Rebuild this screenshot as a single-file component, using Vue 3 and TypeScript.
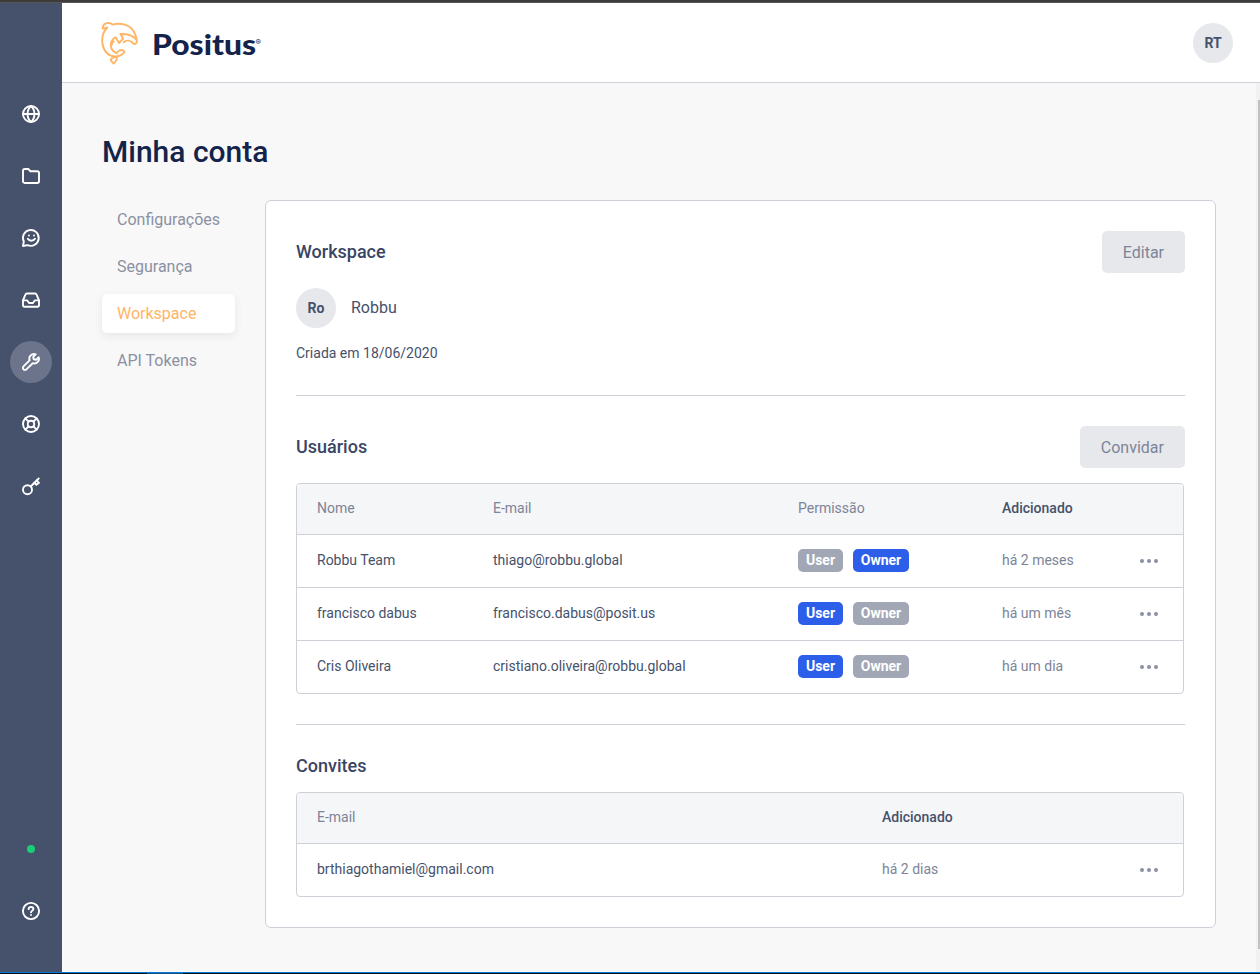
<script setup lang="ts">
import { ref } from 'vue'

interface NavIcon { id: string; shapes: string[]; active?: boolean }
interface Member { name: string; email: string; role: 'User' | 'Owner'; added: string }

const navIcons: NavIcon[] = [
  { id: 'globe', shapes: ['M11 3a8 8 0 1 0 0 16a8 8 0 0 0 0-16z', 'M3 11h16', 'M11 3c-4.6 4-4.6 12 0 16c4.6-4 4.6-12 0-16z'] },
  { id: 'folder', shapes: ['M3 16.2V5.6A1.7 1.7 0 0 1 4.700 4H8.300L10.300 6.200H17.300A1.700 1.700 0 0 1 19 7.900V16.300A1.700 1.700 0 0 1 17.300 18H4.700A1.700 1.700 0 0 1 3 16.200z'] },
  { id: 'chat', shapes: ['M3 19L3.800 14.500A7.900 7.900 0 1 1 7.600 18.100z', 'M7.800 11.800c1.600 2.600 5.600 2.600 7.200 0', 'M8.900 8.500v.1', 'M14 8.500v.1'] },
  { id: 'inbox', shapes: ['M3 11.400L5.400 5.600A1.700 1.700 0 0 1 7 4.500H15A1.700 1.700 0 0 1 16.600 5.600L19 11.400V16A1.700 1.700 0 0 1 17.300 17.700H4.700A1.700 1.700 0 0 1 3 16z', 'M3 11.400H7.300L9 14H13L14.700 11.400H19'] },
  { id: 'wrench', active: true, shapes: ['M15.700 3.300a4.700 4.700 0 0 0-6.100 6L3.500 15.400a1.900 1.900 0 0 0 2.900 2.900L12.700 12.200a4.700 4.700 0 0 0 6-6L16.100 8.700L13.700 8.300L13.200 5.900z'] },
  { id: 'support', shapes: ['M11 3a8 8 0 1 0 0 16a8 8 0 0 0 0-16z', 'M11 7.700a3.300 3.300 0 1 0 0 6.600a3.300 3.300 0 0 0 0-6.600z', 'M5.300 5.300l3.200 3.200M16.700 5.300l-3.200 3.200M5.300 16.700l3.200-3.200M16.700 16.700l-3.200-3.200'] },
  { id: 'key', shapes: ['M7.500 10.200a4.500 4.500 0 1 0 0 9a4.500 4.500 0 0 0 0-9z', 'M10.700 11.500L18.700 3.500', 'M16.700 5.500L19 7.800L16.400 9.700L14.200 7.700'] },
]

const tabs = ['Configurações', 'Segurança', 'Workspace', 'API Tokens']
const activeTab = ref('Workspace')
const roles = ['User', 'Owner'] as const

const members: Member[] = [
  { name: 'Robbu Team', email: 'thiago@robbu.global', role: 'Owner', added: 'há 2 meses' },
  { name: 'francisco dabus', email: 'francisco.dabus@posit.us', role: 'User', added: 'há um mês' },
  { name: 'Cris Oliveira', email: 'cristiano.oliveira@robbu.global', role: 'User', added: 'há um dia' },
]
const invites = [{ email: 'brthiagothamiel@gmail.com', added: 'há 2 dias' }]
</script>

<template>
  <div class="window">
    <div class="window-top"></div>
    <div class="app">
      <aside class="sidebar">
        <nav class="nav">
          <a v-for="item in navIcons" :key="item.id" class="nav-item" :class="{ active: item.active }">
            <svg class="icon" viewBox="0 0 22 22"><path v-for="d in item.shapes" :key="d" :d="d" /></svg>
          </a>
        </nav>
        <div class="sidebar-foot">
          <span class="status"></span>
          <a class="nav-item">
            <svg class="icon" viewBox="0 0 22 22">
              <circle cx="11" cy="11" r="8.100" />
              <path d="M8.600 9.100C8.700 6.200 13.400 6.300 13.400 9C13.400 10.700 11 10.700 11 12.400M11 14.900v.1" />
            </svg>
          </a>
        </div>
      </aside>

      <div class="main">
        <header class="topbar">
          <div class="brand">
            <svg class="dolphin" viewBox="0 0 40 44">
              <path d="M1.600 7.300C2 3.500 4.500 2 7.300 2C9.300 2 10.800 2.700 11.500 3.600C20 1.300 28.500 4 32.500 10C34.800 13.500 35.600 16.500 35.700 19.500C36.200 22.300 34.200 23.800 32.200 22.300C29.500 19.300 25.500 18.600 22.500 21.300" />
              <path d="M1.600 7.300C3 7.800 4.500 7 6.300 6.500C1.500 11.500 .5 17.500 1.600 23.500C3 31 8 35.500 14 35.500C18.500 35.500 21.700 33.500 23.500 31C22.300 28.300 19 28.500 16.700 30.600" />
              <path d="M35.500 18.600C31 13.300 25.500 12.800 19.300 13C20.800 14.500 21.800 16 22 18.300C20.400 18.600 19.700 20.500 18.300 22C16.800 20.500 16 18 14.300 16.200C8 20.500 8 29.500 16.300 32.300" />
              <path d="M11 23.500C10.700 21.800 11.500 20.500 12.800 20.500" />
              <path d="M15.700 35.900C11 36.500 9 38 10.300 40.200L12.600 42.600C14.500 40.500 16.800 38.900 15.700 35.900z" />
            </svg>
            <svg class="wordmark" viewBox="0 0 112 36">
              <text class="word" x="0" y="30" textLength="104" lengthAdjust="spacingAndGlyphs">Positus</text>
              <text class="mark" x="103.500" y="19.500">®</text>
            </svg>
          </div>
          <div class="avatar">RT</div>
        </header>

        <div class="page">
          <main class="content">
            <h1>Minha conta</h1>
            <div class="columns">
              <nav class="tabs">
                <a v-for="tab in tabs" :key="tab" class="tab" :class="{ selected: tab === activeTab }" @click="activeTab = tab">{{ tab }}</a>
              </nav>
              <div class="card">
                <section class="workspace">
                  <div class="section-head"><h2>Workspace</h2><button>Editar</button></div>
                  <div class="identity"><div class="avatar">Ro</div><span>Robbu</span></div>
                  <p class="created">Criada em 18/06/2020</p>
                </section>
                <hr>
                <section class="users">
                  <div class="section-head"><h2>Usuários</h2><button>Convidar</button></div>
                  <div class="table members">
                    <div class="row head"><span>Nome</span><span>E-mail</span><span>Permissão</span><span class="sorted">Adicionado</span><span></span></div>
                    <div v-for="m in members" :key="m.email" class="row">
                      <span>{{ m.name }}</span>
                      <span>{{ m.email }}</span>
                      <span class="badges"><b v-for="r in roles" :key="r" class="badge" :class="{ on: r === m.role }">{{ r }}</b></span>
                      <span class="muted">{{ m.added }}</span>
                      <span class="more"><i></i><i></i><i></i></span>
                    </div>
                  </div>
                </section>
                <hr>
                <section class="invites">
                  <h2>Convites</h2>
                  <div class="table pending">
                    <div class="row head"><span>E-mail</span><span class="sorted">Adicionado</span><span></span></div>
                    <div v-for="i in invites" :key="i.email" class="row">
                      <span>{{ i.email }}</span>
                      <span class="muted">{{ i.added }}</span>
                      <span class="more"><i></i><i></i><i></i></span>
                    </div>
                  </div>
                </section>
              </div>
            </div>
          </main>
          <div class="scrollbar"><div class="thumb"></div></div>
        </div>
      </div>
    </div>
    <div class="window-bottom"></div>
  </div>
</template>

<style>
html, body { margin: 0; overflow: hidden; }
</style>

<style scoped>
* { box-sizing: border-box; }
.window { width: 1260px; height: 974px; display: flex; flex-direction: column; font-family: Roboto, sans-serif; color: #46516b; background: #f8f8f8; }
.window-top { height: 3px; flex: none; background: #3c3c3c; border-bottom: 1px solid #565656; }
.window-bottom { height: 2px; flex: none; border-top: 1px solid #0878d8; background: linear-gradient(90deg, #06131f 147px, #155080 147px, #155080 183px, #06131f 183px); }
.app { flex: 1; min-height: 0; display: flex; }
.sidebar { width: 62px; flex: none; background: #46516b; display: flex; flex-direction: column; justify-content: space-between; align-items: center; padding: 90px 0 40px; }
.nav { display: flex; flex-direction: column; gap: 20px; }
.nav-item { width: 42px; height: 42px; border-radius: 50%; display: flex; align-items: center; justify-content: center; }
.nav-item.active { background: #6b748a; }
.icon { width: 22px; height: 22px; fill: none; stroke: #fff; stroke-width: 1.9; stroke-linecap: round; stroke-linejoin: round; }
.sidebar-foot { display: flex; flex-direction: column; align-items: center; gap: 37px; }
.status { width: 8px; height: 8px; border-radius: 50%; background: #18ce77; }
.main { flex: 1; display: flex; flex-direction: column; min-width: 0; }
.topbar { height: 80px; flex: none; background: #fff; border-bottom: 1px solid #cfd0d8; display: flex; justify-content: space-between; align-items: center; padding: 0 27px 0 39px; }
.brand { display: flex; align-items: center; gap: 11px; }
.dolphin { width: 40px; height: 44px; fill: none; stroke: #ffb566; stroke-width: 1.9; stroke-linejoin: round; stroke-linecap: round; }
.wordmark { width: 112px; height: 36px; fill: #14234b; overflow: visible; }
.word { font: 900 29px Lato, sans-serif; }
.mark { font: 8px Inter, sans-serif; }
.avatar { width: 40px; height: 40px; border-radius: 50%; background: #e7e8ec; display: flex; align-items: center; justify-content: center; font-size: 14px; font-weight: 700; }
.page { flex: 1; min-height: 0; display: flex; }
.content { flex: 1; padding: 51px 40px 0 40px; }
.scrollbar { width: 4px; background: #f1f1f1; padding: 17px 0 0 2px; }
.thumb { height: 849px; background: #c1c1c1; }
h1 { margin: 0; font-size: 30px; line-height: 36px; font-weight: 500; color: #14234b; }
.columns { display: flex; align-items: flex-start; gap: 30px; margin-top: 30px; }
.tabs { width: 133px; display: flex; flex-direction: column; gap: 8px; }
.tab { height: 39px; line-height: 39px; padding-left: 15px; font-size: 16px; border-radius: 5px; color: #8b91a2; }
.tab.selected { background: #fff; color: #ffb566; box-shadow: 0 3px 8px rgba(20, 35, 75, .08); }
.card { flex: 1; height: 728px; background: #fff; border: 1px solid #cfd0d8; border-radius: 6px; padding: 30px; }
.section-head { height: 42px; display: flex; justify-content: space-between; align-items: center; margin-bottom: 15px; }
h2 { margin: 0; font-size: 18px; line-height: 22px; font-weight: 500; color: #3a4563; }
button { height: 42px; border: 0; border-radius: 5px; padding: 0 21px; background: #e7e8ec; color: #7d8497; font: 16px Roboto, sans-serif; }
.identity { display: flex; align-items: center; gap: 15px; font-size: 16px; }
.identity span { padding-bottom: 2px; }
.created { margin: 17px 0 34px; font-size: 14px; line-height: 16px; }
hr { height: 1px; border: 0; margin: 0 0 30px; background: #cfd0d8; }
.table { width: 888px; border: 1px solid #cfd0d8; border-radius: 4px; overflow: hidden; font-size: 14px; }
.users .table { margin-bottom: 30px; }
.invites h2 { margin-bottom: 15px; }
.row { display: grid; height: 53px; align-items: center; border-top: 1px solid #cfd0d8; padding-left: 20px; }
.row > span { padding-bottom: 2px; }
.members .row { grid-template-columns: 176px 305px 204px 138px 1fr; }
.pending .row { grid-template-columns: 565px 258px 1fr; }
.row.head { height: 50px; border-top: 0; background: #f5f6f8; color: #7d8497; }
.sorted { color: #46516b; font-weight: 500; }
.muted { color: #7d8497; }
.badges { display: flex; gap: 10px; }
.badge { height: 23px; line-height: 23px; width: 45px; text-align: center; border-radius: 5px; background: #a2a7b5; color: #fff; font-weight: 700; }
.badge + .badge { width: 56px; }
.badge.on { background: #2d5eea; }
.row > .more { display: flex; gap: 3px; padding: 0; }
.more i { width: 4px; height: 4px; border-radius: 50%; background: #8b91a5; }
</style>
